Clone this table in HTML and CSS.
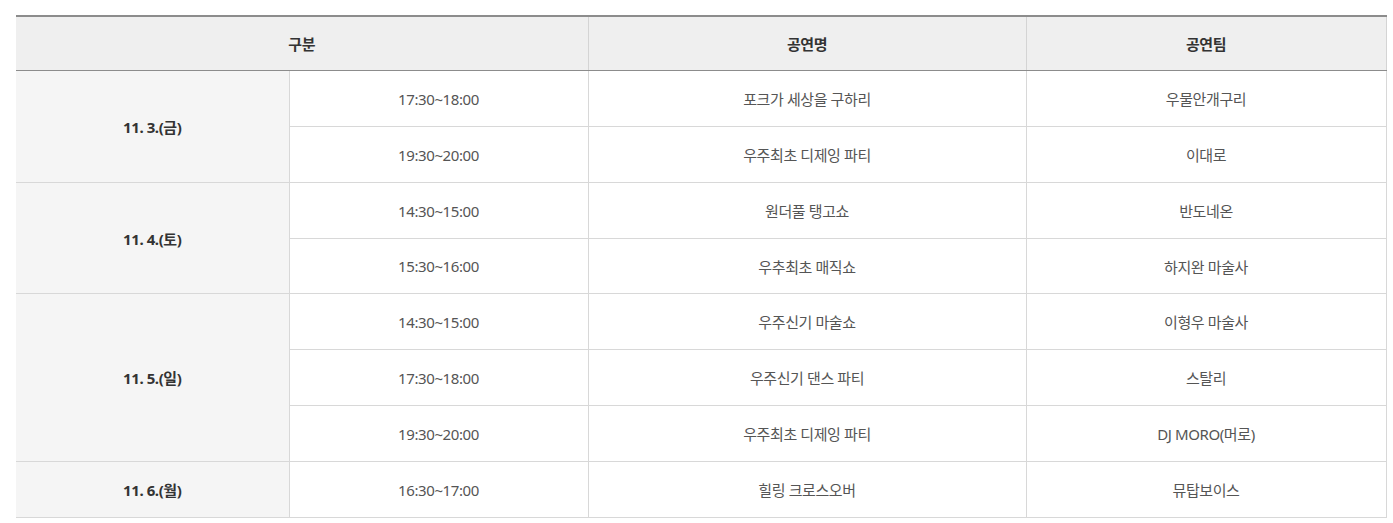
FILE: index.html
```html
<!DOCTYPE html>
<html lang="ko">
<head>
<meta charset="utf-8">
<link rel="stylesheet" href="styles.css">
</head>
<body>
<div class="wrap">
<table class="sched">
  <colgroup>
    <col class="c1"><col class="c2"><col class="c3"><col class="c4">
  </colgroup>
  <thead>
    <tr><th colspan="2">구분</th><th>공연명</th><th>공연팀</th></tr>
  </thead>
  <tbody>
    <tr><td class="date" rowspan="2">11. 3.(금)</td><td>17:30~18:00</td><td>포크가 세상을 구하리</td><td>우물안개구리</td></tr>
    <tr><td>19:30~20:00</td><td>우주최초 디제잉 파티</td><td>이대로</td></tr>
    <tr><td class="date" rowspan="2">11. 4.(토)</td><td>14:30~15:00</td><td>원더풀 탱고쇼</td><td>반도네온</td></tr>
    <tr class="short"><td>15:30~16:00</td><td>우추최초 매직쇼</td><td>하지완 마술사</td></tr>
    <tr><td class="date" rowspan="3">11. 5.(일)</td><td>14:30~15:00</td><td>우주신기 마술쇼</td><td>이형우 마술사</td></tr>
    <tr><td>17:30~18:00</td><td>우주신기 댄스 파티</td><td>스탈리</td></tr>
    <tr><td>19:30~20:00</td><td>우주최초 디제잉 파티</td><td>DJ MORO(머로)</td></tr>
    <tr><td class="date">11. 6.(월)</td><td>16:30~17:00</td><td>힐링 크로스오버</td><td>뮤탑보이스</td></tr>
  </tbody>
</table>
</div>
</body>
</html>
```

FILE: styles.css
```css
html, body { margin: 0; padding: 0; background: #fff; }
body { font-family: "Noto Sans", "Noto Sans CJK KR", sans-serif; }
.wrap { padding: 15px 0 0 16px; }
.sched {
  width: 1370px;
  border-collapse: collapse;
  table-layout: fixed;
  border-top: 2px solid #8c8c8c;
  font-size: 15px;
  color: #555;
}
.c1 { width: 273px; }
.c2 { width: 299px; }
.c3 { width: 438px; }
.c4 { width: 360px; }
.sched th {
  height: 53px;
  padding: 0;
  background: #efefef;
  color: #333;
  font-weight: 700;
  border-bottom: 1px solid #8c8c8c;
  border-left: 1px solid #d4d4d4;
  border-right: 1px solid #d4d4d4;
  letter-spacing: -0.4px;
}
.sched th:first-child { border-left: none; }
.sched td {
  height: 55px;
  padding: 0;
  text-align: center;
  border: 1px solid #d8d8d8;
  letter-spacing: -0.4px;
}
.sched tr.short td { height: 54px; }
.sched td.date {
  background: #f5f5f5;
  color: #333;
  font-weight: 700;
  border-left: none;
}
```
